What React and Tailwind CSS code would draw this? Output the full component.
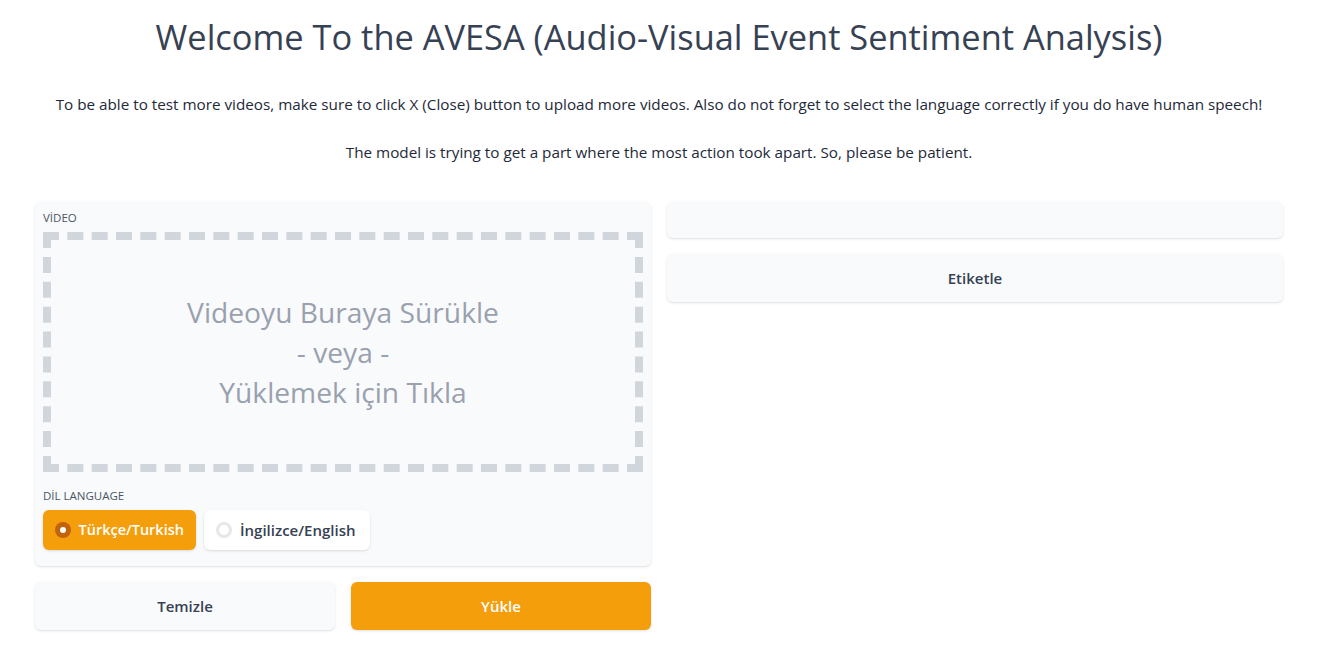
export default function App() {
  return (
    <div className="min-h-screen bg-white text-gray-700" style={{ fontFamily: "'Open Sans', 'Noto Sans', sans-serif" }}>
      <div className="pl-[35px] pr-[39px] pt-[14px]">
        <h1 className="text-center text-[34.4px] leading-[46px] text-gray-700">
          Welcome To the AVESA (Audio-Visual Event Sentiment Analysis)
        </h1>
        <p className="mt-[33px] text-center text-[15.25px] leading-[22px] text-gray-800">
          To be able to test more videos, make sure to click X (Close) button to upload more videos. Also do not forget to select the language correctly if you do have human speech!
        </p>
        <p className="mt-[26px] text-center text-[15.25px] leading-[22px] text-gray-800">
          The model is trying to get a part where the most action took apart. So, please be patient.
        </p>

        <div className="mt-[39px] grid grid-cols-2 gap-4">
          <div className="flex flex-col gap-4">
            <div className="rounded-md bg-gray-50 px-2 pt-2 pb-4 shadow-sm">
              <div className="text-[11.5px] leading-4 text-gray-600">VİDEO</div>
              <div className="mt-[6px] flex h-[240px] flex-col items-center justify-center border-8 border-dashed border-gray-300 text-[28.2px] leading-[40px] text-gray-400">
                <div>Videoyu Buraya Sürükle</div>
                <div>- veya -</div>
                <div>Yüklemek için Tıkla</div>
              </div>
              <div className="mt-4 text-[11.5px] leading-4 text-gray-600">DİL LANGUAGE</div>
              <div className="mt-[6px] flex gap-2">
                <div className="flex h-10 w-[153px] items-center gap-2 rounded-md bg-[#f59e0b] px-3 text-[14.5px] font-semibold text-white shadow-sm">
                  <span className="flex h-4 w-4 items-center justify-center rounded-full bg-[#c2620c]">
                    <span className="h-[6px] w-[6px] rounded-full bg-white" />
                  </span>
                  Türkçe/Turkish
                </div>
                <div className="flex h-10 w-[166px] items-center gap-2 rounded-md bg-white px-3 text-[15px] font-semibold text-gray-700 shadow-sm">
                  <span className="h-4 w-4 rounded-full border-[3px] border-gray-200 bg-white" />
                  İngilizce/English
                </div>
              </div>
            </div>
            <div className="grid grid-cols-2 gap-4">
              <button className="h-12 rounded-md bg-gray-50 text-[15px] font-semibold text-gray-700 shadow-sm">Temizle</button>
              <button className="h-12 rounded-md bg-[#f59e0b] text-[15px] font-semibold text-white shadow-sm">Yükle</button>
            </div>
          </div>
          <div className="flex flex-col gap-4">
            <div className="h-9 rounded-md bg-gray-50 shadow-sm" />
            <button className="h-12 rounded-md bg-gray-50 text-[15px] font-semibold text-gray-700 shadow-sm">Etiketle</button>
          </div>
        </div>
      </div>
    </div>
  );
}
